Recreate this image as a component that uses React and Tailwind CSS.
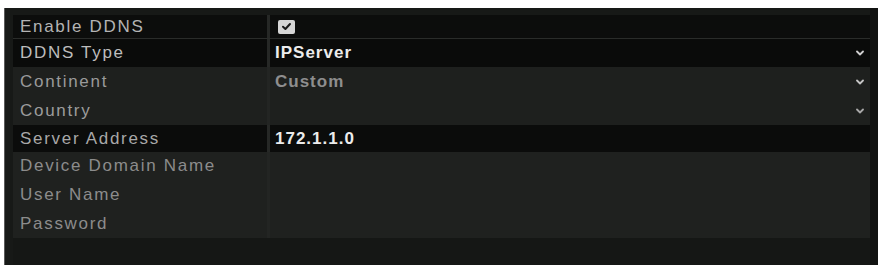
import React from 'react';

const Chevron = ({ className }) => (
  <svg width="8" height="6" viewBox="0 0 8 6" className={className}>
    <path d="M1 1.5 L4 4.5 L7 1.5" fill="none" stroke="currentColor" strokeWidth="1.8" strokeLinecap="round" strokeLinejoin="round" />
  </svg>
);

const rows = [
  { label: 'Enable DDNS', h: 'h-[24px]', bg: 'bg-[#0c0d0c]', labelColor: 'text-[#b4b4b4]', kind: 'check' },
  { label: 'DDNS Type', h: 'h-[28px]', bg: 'bg-[#0a0b0a]', labelColor: 'text-[#bdbdbd]', value: 'IPServer', valueColor: 'text-[#ececec]', chevron: 'text-[#cfcfcf]' },
  { label: 'Continent', h: 'h-[29px]', bg: 'bg-[#1e201e]', labelColor: 'text-[#9a9a9a]', value: 'Custom', valueColor: 'text-[#8e8e8e]', chevron: 'text-[#c4c4c4]' },
  { label: 'Country', h: 'h-[29px]', bg: 'bg-[#1e201e]', labelColor: 'text-[#9c9c9c]', chevron: 'text-[#a8a8a8]' },
  { label: 'Server Address', h: 'h-[27px]', bg: 'bg-[#0b0c0b]', labelColor: 'text-[#a8a8a8]', value: '172.1.1.0', valueColor: 'text-[#ececec]' },
  { label: 'Device Domain Name', h: 'h-[28px]', bg: 'bg-[#1f211f]', labelColor: 'text-[#8c8c8c]' },
  { label: 'User Name', h: 'h-[29px]', bg: 'bg-[#1f211f]', labelColor: 'text-[#8c8c8c]' },
  { label: 'Password', h: 'h-[29px]', bg: 'bg-[#1f211f]', labelColor: 'text-[#8c8c8c]' },
];

export default function App() {
  return (
    <div className="w-[881px] h-[268px] bg-white pt-[8px] pl-[4px] pr-[3px] pb-[3px] font-['Liberation_Sans',Arial,sans-serif]">
      <div className="h-full flex border-l border-[#5a5a5a] bg-[#171917]">
        <div className="flex-1 flex flex-col pt-[7px] pl-[8px]">
          {rows.map((row, i) => (
            <div
              key={row.label}
              className={`flex ${row.h} ${i === 0 ? 'border-b border-[#2a2c2a]' : ''}`}
            >
              <div className={`w-[254px] flex items-center pl-[7px] ${row.bg}`}>
                <span className={`text-[17px] tracking-[1.7px] ${row.labelColor}`}>{row.label}</span>
              </div>
              <div className={`w-[3px] ${row.bg === 'bg-[#1e201e]' || row.bg === 'bg-[#1f211f]' ? 'bg-[#232523]' : 'bg-[#262826]'}`}></div>
              <div className={`flex-1 flex items-center justify-between pl-[5px] pr-[6px] ${row.bg}`}>
                {row.kind === 'check' ? (
                  <div className="ml-[3px] w-[17px] h-[14px] rounded-[2px] bg-[#d6d6d6] flex items-center justify-center">
                    <svg width="11" height="9" viewBox="0 0 11 9">
                      <path d="M2 4.8 L4.4 7 L9 2" fill="none" stroke="#1a1a1a" strokeWidth="2" strokeLinecap="round" strokeLinejoin="round" />
                    </svg>
                  </div>
                ) : (
                  <span className={`text-[17px] font-bold tracking-[1px] ${row.valueColor || ''}`}>{row.value || ''}</span>
                )}
                {row.chevron && <Chevron className={row.chevron} />}
              </div>
            </div>
          ))}
          <div className="flex-1 bg-[#151715]"></div>
        </div>
        <div className="w-[8px] bg-[#111211]"></div>
      </div>
    </div>
  );
}
